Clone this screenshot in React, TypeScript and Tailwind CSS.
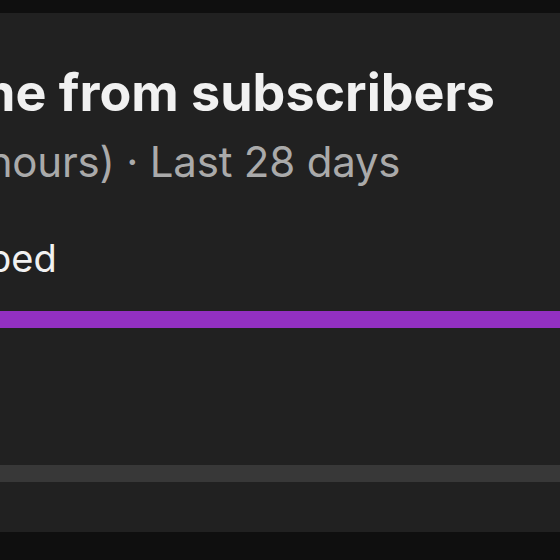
export default function App() {
  return (
    <div className="h-[560px] w-[560px] overflow-hidden bg-[#0f0f0f] pt-[13px] font-['Inter',sans-serif]">
      {/* Card, cropped on the left */}
      <div className="h-[519px] overflow-hidden bg-[#212121]">
        <div className="-ml-[240px] pt-[54px]">
          <h2 className="whitespace-nowrap text-[52px] font-bold leading-none text-[#f1f1f1]">
            Watch time from subscribers
          </h2>
          <p className="-ml-[19px] mt-[22px] whitespace-nowrap text-[42px] leading-none tracking-[-0.2px] text-[#aaaaaa]">
            Watch time (hours) · Last 28 days
          </p>

          {/* Legend */}
          <div className="mt-[56px] flex items-center gap-[68px] whitespace-nowrap text-[38px] leading-none text-[#f1f1f1]">
            <span className="h-[24px] w-[24px] rounded-full bg-[#9330c2]" />
            <span>Subscribed</span>
          </div>

          {/* Bars */}
          <div className="mt-[34px] h-[17px] bg-[#9330c2]" />
          <div className="mt-[137px] h-[17px] bg-[#383838]" />
        </div>
      </div>
    </div>
  );
}
